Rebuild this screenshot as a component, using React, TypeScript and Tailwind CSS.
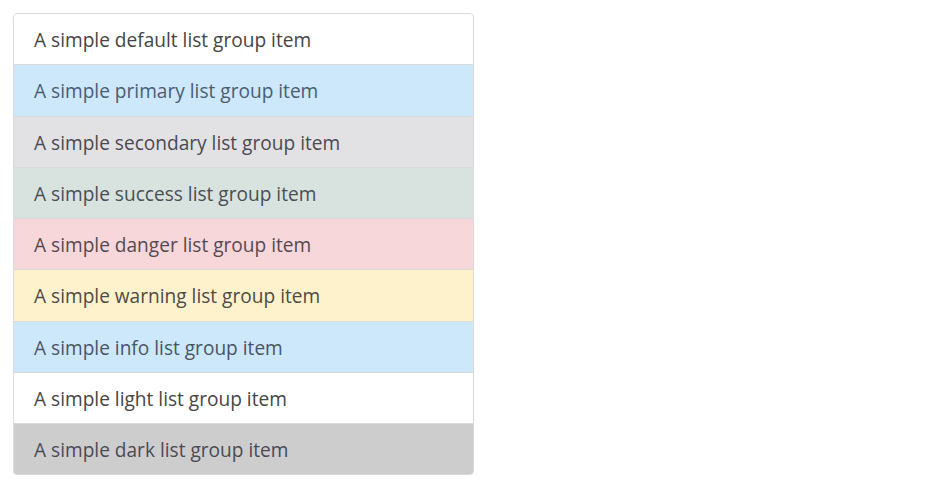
import React from "react";

const items: { label: string; cls: string }[] = [
  { label: "default", cls: "bg-white text-[#454545]" },
  { label: "primary", cls: "bg-[#cce8fa] text-[#4a5d74]" },
  { label: "secondary", cls: "bg-[#e2e1e4] text-[#4a4a52]" },
  { label: "success", cls: "bg-[#d8e2df] text-[#4a4f55]" },
  { label: "danger", cls: "bg-[#f7d7da] text-[#554a50]" },
  { label: "warning", cls: "bg-[#fef2cd] text-[#4f4a45]" },
  { label: "info", cls: "bg-[#cde8fa] text-[#4a5468]" },
  { label: "light", cls: "bg-white text-[#454545]" },
  { label: "dark", cls: "bg-[#cdcdcd] text-[#4a4a55]" },
];

export default function App() {
  return (
    <div className="w-[950px] h-[488px] bg-white p-[13px]" style={{ fontFamily: '"Open Sans", "Noto Sans", sans-serif' }}>
      <ul className="w-[461px] flex flex-col rounded-[4px] overflow-hidden">
        {items.map((it, i) => (
          <li
            key={it.label}
            className={`border border-[#dadada] px-[20px] pt-[13.125px] pb-[11.125px] text-[19.1px] leading-[26px] ${it.cls} ${i > 0 ? "-mt-px" : ""} ${i === 0 ? "rounded-t-[4px]" : ""} ${i === items.length - 1 ? "rounded-b-[4px]" : ""}`}
          >
            A simple {it.label} list group item
          </li>
        ))}
      </ul>
    </div>
  );
}
